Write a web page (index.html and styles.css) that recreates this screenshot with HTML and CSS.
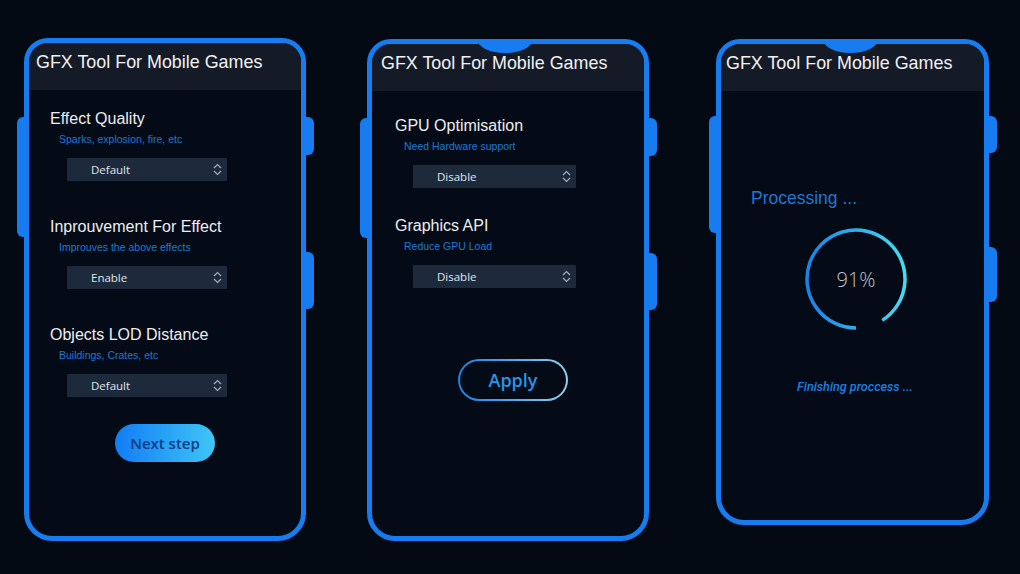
FILE: index.html
```html
<!DOCTYPE html>
<html lang="en">
<head>
    <meta charset="UTF-8">
    <meta name="viewport" content="width=device-width, initial-scale=1.0">
    <title>GFX Tool For Mobile Games</title>
    <link rel="stylesheet" href="styles.css">
</head>
<body>
    <div class="phones">

        <!-- Step 1 : effects -->
        <div class="phone phone-effects">
            <span class="bump bump-left"></span>
            <span class="bump bump-r1"></span>
            <span class="bump bump-r2"></span>
            <div class="screen-head">
                <div class="screen-title">GFX Tool For Mobile Games</div>
            </div>
            <div class="screen-body">
                <div class="setting">
                    <div class="setting-label">Effect Quality</div>
                    <div class="setting-hint">Sparks, explosion, fire, etc</div>
                    <div class="select">
                        <span class="select-value">Default</span>
                        <svg class="select-arrows" width="9" height="13" viewBox="0 0 9 13"><path d="M1 5 L4.5 1.5 L8 5 M1 8 L4.5 11.5 L8 8" fill="none" stroke="#a3aebd" stroke-width="1.2"/></svg>
                    </div>
                </div>
                <div class="setting">
                    <div class="setting-label">Inprouvement For Effect</div>
                    <div class="setting-hint">Improuves the above effects</div>
                    <div class="select">
                        <span class="select-value">Enable</span>
                        <svg class="select-arrows" width="9" height="13" viewBox="0 0 9 13"><path d="M1 5 L4.5 1.5 L8 5 M1 8 L4.5 11.5 L8 8" fill="none" stroke="#a3aebd" stroke-width="1.2"/></svg>
                    </div>
                </div>
                <div class="setting">
                    <div class="setting-label">Objects LOD Distance</div>
                    <div class="setting-hint">Buildings, Crates, etc</div>
                    <div class="select">
                        <span class="select-value">Default</span>
                        <svg class="select-arrows" width="9" height="13" viewBox="0 0 9 13"><path d="M1 5 L4.5 1.5 L8 5 M1 8 L4.5 11.5 L8 8" fill="none" stroke="#a3aebd" stroke-width="1.2"/></svg>
                    </div>
                </div>
                <button class="btn-next">Next step</button>
            </div>
        </div>

        <!-- Step 2 : gpu -->
        <div class="phone phone-gpu">
            <span class="notch"></span>
            <span class="bump bump-left"></span>
            <span class="bump bump-r1"></span>
            <span class="bump bump-r2"></span>
            <div class="screen-head">
                <div class="screen-title">GFX Tool For Mobile Games</div>
            </div>
            <div class="screen-body">
                <div class="setting">
                    <div class="setting-label">GPU Optimisation</div>
                    <div class="setting-hint">Need Hardware support</div>
                    <div class="select">
                        <span class="select-value">Disable</span>
                        <svg class="select-arrows" width="9" height="13" viewBox="0 0 9 13"><path d="M1 5 L4.5 1.5 L8 5 M1 8 L4.5 11.5 L8 8" fill="none" stroke="#a3aebd" stroke-width="1.2"/></svg>
                    </div>
                </div>
                <div class="setting">
                    <div class="setting-label">Graphics API</div>
                    <div class="setting-hint">Reduce GPU Load</div>
                    <div class="select">
                        <span class="select-value">Disable</span>
                        <svg class="select-arrows" width="9" height="13" viewBox="0 0 9 13"><path d="M1 5 L4.5 1.5 L8 5 M1 8 L4.5 11.5 L8 8" fill="none" stroke="#a3aebd" stroke-width="1.2"/></svg>
                    </div>
                </div>
                <button class="btn-apply">Apply</button>
            </div>
        </div>

        <!-- Step 3 : processing -->
        <div class="phone phone-progress">
            <span class="notch"></span>
            <span class="bump bump-left"></span>
            <span class="bump bump-r1"></span>
            <span class="bump bump-r2"></span>
            <div class="screen-head">
                <div class="screen-title">GFX Tool For Mobile Games</div>
            </div>
            <div class="screen-body">
                <div class="progress-title">Processing ...</div>
                <div class="ring">
                    <svg width="106" height="106" viewBox="0 0 106 106">
                        <defs>
                            <linearGradient id="ringGrad" gradientUnits="userSpaceOnUse" x1="4" y1="0" x2="102" y2="0">
                                <stop offset="0" stop-color="#1b82e4"/>
                                <stop offset="1" stop-color="#46dcef"/>
                            </linearGradient>
                        </defs>
                        <path d="M53 102 A49 49 0 1 1 79.26 94.37" fill="none" stroke="url(#ringGrad)" stroke-width="3.5"/>
                    </svg>
                    <span class="ring-value">91%</span>
                </div>
                <div class="progress-status">Finishing proccess ...</div>
            </div>
        </div>

    </div>
</body>
</html>
```

FILE: styles.css
```css
body {
    margin: 0;
    width: 1020px;
    height: 574px;
    overflow: hidden;
    background-color: #040a13;
    font-family: "Liberation Sans", Arial, sans-serif;
}
.phones {
    display: flex;
    align-items: flex-start;
    padding: 38px 0 0 24px;
}
.phone {
    position: relative;
    box-sizing: border-box;
    width: 282px;
    height: 503px;
    border: 5px solid #177cf0;
    border-radius: 24px 24px 28px 28px;
    background-color: #050b16;
}
.phone-gpu {
    margin: 1px 0 0 61px;
    height: 502px;
}
.phone-progress {
    margin: 1px 0 0 67px;
    width: 273px;
    height: 486px;
}

/* side buttons and notch */
.bump {
    position: absolute;
    width: 12px;
    background-color: #177cf0;
}
.bump-left { left: -12px; top: 74px; height: 120px; border-radius: 6px 0 0 6px; }
.bump-r1 { right: -13px; top: 74px; height: 38px; border-radius: 0 6px 6px 0; }
.bump-r2 { right: -13px; top: 209px; height: 57px; border-radius: 0 6px 6px 0; }
.phone-progress .bump-left { top: 72px; height: 117px; }
.phone-progress .bump-r1 { top: 72px; height: 37px; }
.phone-progress .bump-r2 { top: 203px; height: 55px; }
.notch {
    position: absolute;
    z-index: 1;
    top: -5px;
    left: calc(50% - 31px);
    width: 56px;
    height: 14px;
    background-color: #177cf0;
    border-radius: 0 0 28px 28px / 0 0 14px 14px;
}
.phone-progress .notch { left: calc(50% - 30px); width: 55px; }

/* header */
.screen-head {
    box-sizing: border-box;
    height: 47px;
    padding: 8px 0 0 7px;
    background-color: #151b26;
    border-radius: 19px 19px 0 0;
}
.phone-gpu .screen-head { padding-left: 9px; }
.phone-progress .screen-head { padding-left: 5px; }
.screen-title {
    font-size: 17.9px;
    line-height: 22px;
    color: #f1f2f4;
}

/* settings */
.screen-body {
    display: flex;
    flex-direction: column;
    padding: 18.5px 0 0 21px;
}
.phone-gpu .screen-body { padding: 24.5px 0 0 23px; }
.setting + .setting { margin-top: 36px; }
.phone-gpu .setting + .setting { margin-top: 28px; }
.setting-label {
    font-size: 16px;
    line-height: 20px;
    color: #eceef1;
}
.setting-hint {
    margin: 3px 0 0 9px;
    font-size: 10.5px;
    line-height: 14px;
    color: #1d79d3;
}
.select {
    display: flex;
    align-items: center;
    justify-content: space-between;
    box-sizing: border-box;
    width: 160px;
    height: 23px;
    margin: 12px 0 0 17px;
    padding: 0 5px 0 24px;
    background-color: #1c2a3b;
    border-radius: 1px;
}
.phone-gpu .select { width: 163px; margin-left: 18px; }
.select-value {
    font-family: "Open Sans", sans-serif;
    font-size: 11.5px;
    font-weight: 500;
    color: #e1e5ea;
}

/* buttons */
.btn-next {
    align-self: center;
    width: 100px;
    height: 38px;
    margin: 27px 21px 0 0;
    border: none;
    border-radius: 19px;
    background: linear-gradient(90deg, #117df4, #3fc6f7);
    font-family: "Open Sans", sans-serif;
    font-size: 15px;
    font-weight: 600;
    color: #0c3d84;
    cursor: pointer;
}
.btn-apply {
    align-self: center;
    box-sizing: border-box;
    width: 110px;
    height: 42px;
    margin: 71px 13px 0 0;
    border: 2px solid transparent;
    border-radius: 21px;
    background: linear-gradient(#050b16, #050b16) padding-box,
                linear-gradient(90deg, #1683e8, #8fd0ee) border-box;
    font-family: "Open Sans", sans-serif;
    font-size: 18px;
    font-weight: 600;
    color: #2497e8;
    cursor: pointer;
}

/* progress */
.phone-progress .screen-body {
    padding: 97px 0 0 0;
}
.progress-title {
    margin-left: 30px;
    font-size: 17.5px;
    line-height: 20px;
    color: #1e78d4;
}
.ring {
    display: grid;
    place-items: center;
    align-self: center;
    margin: 18px 0 0 7px;
}
.ring > * { grid-area: 1 / 1; }
.ring svg { display: block; }
.ring-value {
    font-family: "Open Sans", sans-serif;
    font-size: 20px;
    font-weight: 300;
    color: #c0c5cb;
}
.progress-status {
    align-self: center;
    margin: 47px 0 0 5px;
    font-family: Roboto, sans-serif;
    font-size: 12.6px;
    font-style: italic;
    font-weight: 500;
    line-height: 16px;
    color: #1d7fe0;
}
```
